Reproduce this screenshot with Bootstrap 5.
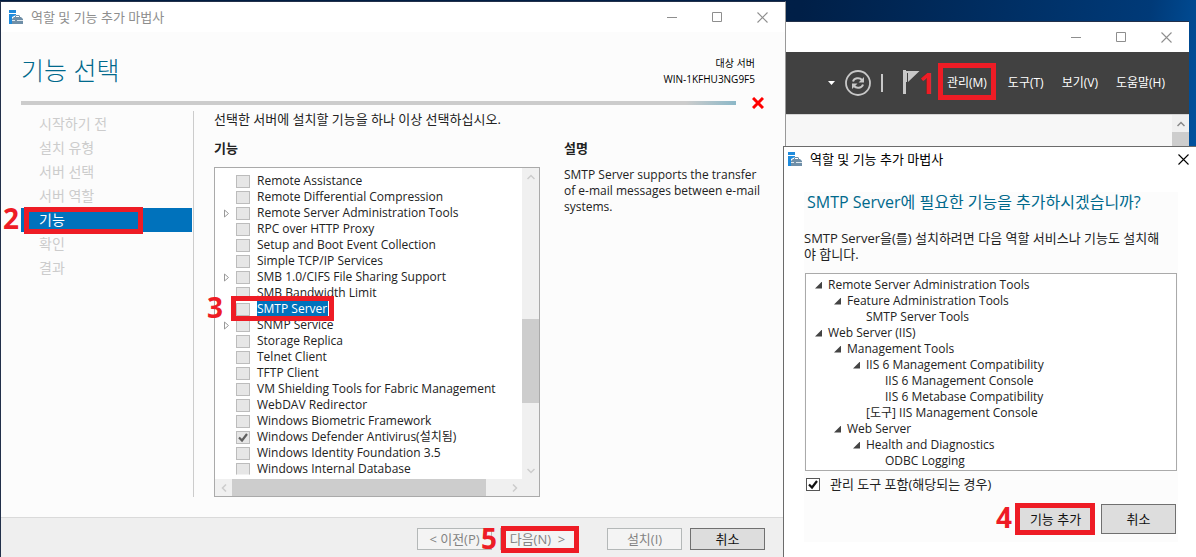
<!DOCTYPE html>
<html lang="ko">
<head>
<meta charset="utf-8">
<meta name="viewport" content="width=device-width, initial-scale=1">
<title>역할 및 기능 추가 마법사</title>
<link href="https://cdn.jsdelivr.net/npm/bootstrap@5.3.0/dist/css/bootstrap.min.css" rel="stylesheet">
<style>
  body { font-family: "Open Sans", "Noto Sans CJK KR", sans-serif; font-size: 13px; line-height: 16px; color: #222; }
  .desktop { background: linear-gradient(100deg, #001c40 0%, #001f47 62%, #003a78 89%, #0062b8 98%); }
  .win { position: absolute; background: #fff; }
  .win-wizard { left: 0; top: 1px; right: 410px; bottom: 0; border: 1px solid #22304a; border-right-color: #999; border-bottom: 0; background: #fcfcfc; }
  .win-manager { right: 7px; top: 21px; bottom: 0; width: 405px; border-top: 1px solid #22304a; }
  .win-dialog { right: 0; top: 146px; bottom: 0; width: 413px; border: 1px solid #6b6b6b; border-right: 0; border-bottom: 0; }

  .title-row { height: 30px; background: #fff; color: #8e8e8e; }
  .win-dialog .title-row { height: 24px; color: #000; }
  .win-btn { width: 45px; padding: 0; border: 0; background: none; color: inherit; line-height: 0; }
  .win-dialog .win-btn { width: 26px; }

  .wiz-head { padding: 22px 30px 0 20px; }
  .wiz-title { font-size: 25px; line-height: 32px; font-weight: 300; color: #00698c; }
  .server-name { font-size: 10px; padding-top: 1px; }
  .wiz-rule { padding: 10px 21px 0 20px; }
  .rule { height: 4px; background: linear-gradient(90deg, #ccc 93%, #8cb8c8 100%); }
  .wiz-body { padding: 2px 20px 20px; }
  .steps { width: 173px; padding-top: 1px; border-right: 1px solid #ccc; }
  .steps a { display: flex; align-items: center; height: 24px; margin-right: 1px; padding-left: 18px; font-size: 14px; color: #ccc; text-decoration: none; }
  .steps a.current { position: relative; background: #0072bc; color: #fff; }
  .wiz-main { padding-left: 20px; }
  .pair { padding-top: 13px; }
  .pair h2 { font-size: 13px; line-height: 16px; font-weight: 700; margin: 0 0 11px; }
  .col-list { width: 326px; }
  .no-min { min-height: 0; }
  .frame { border: 1px solid #aaa; background: #fff; }
  .feature-list { padding-top: 5px; margin-bottom: 2px; font-size: 12px; overflow-x: visible; overflow-y: clip; }
  .feature { height: 16px; padding-left: 9px; }
  .feature:last-child .tick { clip-path: inset(0 0 1px); }
  .expander { width: 6px; margin-right: 6px; line-height: 0; }
  .feature label { padding-left: 7px; white-space: nowrap; }
  .feature .chosen { margin-left: 7px; padding: 0 1px 0 0; background: #0072bc; color: #fff; }
  .tick { appearance: none; flex: none; width: 14px; height: 13px; margin: 0; border: 1px solid #bcbcbc; border-radius: 0; background: #e6e6e6 center/12px 11px no-repeat; }
  .tick:checked { background-image: url("data:image/svg+xml,%3Csvg xmlns='http://www.w3.org/2000/svg' viewBox='0 0 12 11'%3E%3Cpath fill='none' stroke='%23606060' stroke-width='2.2' d='M2 5.5l3 3L10 2'/%3E%3C/svg%3E"); }
  .tick-live { border-color: #555; background-color: #fff; }
  .tick-live:checked { background-image: url("data:image/svg+xml,%3Csvg xmlns='http://www.w3.org/2000/svg' viewBox='0 0 12 11'%3E%3Cpath fill='none' stroke='%23111' stroke-width='2.2' d='M2 5.5l3 3L10 2'/%3E%3C/svg%3E"); }

  .vbar { width: 17px; background: #f0f0f0; color: #ccc; }
  .hbar { height: 17px; background: #f0f0f0; color: #ccc; }
  .arrow { flex: none; width: 17px; height: 17px; display: flex; align-items: center; justify-content: center; }
  .turn-right { transform: rotate(90deg); }
  .turn-down { transform: rotate(180deg); }
  .turn-left { transform: rotate(-90deg); }
  .thumb { background: #cdcdcd; }

  .foot { height: 40px; border-top: 1px solid #dadada; background: #efefef; padding: 10px 20px 0 0; }
  .push { width: 75px; height: 22px; padding: 0; border: 1px solid #707070; background: #ddd; color: #111; font-size: 13px; line-height: 16px; white-space: nowrap; }
  .push:disabled { border-color: #b4b8b8; background: #f4f4f4; color: #838383; }
  .win-dialog .push { height: 30px; }

  .menu-row { height: 62px; padding-right: 23px; background: #414141; color: #ccc; }
  .menu-row a { padding: 0 1px; color: #fff; text-decoration: none; font-size: 12px; white-space: nowrap; }
  .menu-row .gap-wide { margin-right: 19px; }
  .manager-body { background: #f7f7f7; border-top: 1px solid #d5d5d5; }
  .manager-body .vbar { color: #888; }

  .panel { margin: 21px 18px 15px 20px; background: #fcfcfc; }
  .ask { font-size: 16px; line-height: 20px; color: #00698c; font-weight: 400; padding-left: 3px; }
  .need { margin: 18px 0 11px; padding-right: 14px; word-break: break-all; }
  .tree { font-size: 12px; margin: 0 1px; padding: 3px 0 1px 9px; }
  .tree ul { padding-left: 19px; }
  .tree span { display: flex; align-items: center; height: 16px; padding-left: 13px; white-space: nowrap; }
  .tree span.open { padding-left: 0; }
  .tree span.open::before { content: ""; width: 7px; height: 7px; margin-right: 6px; background: #444; clip-path: polygon(100% 0, 100% 100%, 0 100%); }
  .include { padding: 5px 2px 0; }
  .include label { padding-left: 10px; }
  .actions { padding: 12px 2px 0; }

  .ring { position: absolute; border: 5px solid #ee1c25; pointer-events: none; }
  .num { position: absolute; color: #ee1c25; font-size: 28px; font-weight: 700; line-height: 28px; }
  .r1 { inset: -12px -8px -9px -8px; }   .n1 { left: -27px; top: -6px; }
  .r2 { inset: -1px 49px -2px 3px; }     .n2 { left: -18px; top: -4px; }
  .r3 { inset: -5px -6px -4px -26px; }   .n3 { left: -50px; top: -8px; }
  .r4 { inset: -2px -3px -2px -4px; }    .n4 { left: -23px; top: -2px; }
  .r5 { inset: -3px -5px -4px 0; }       .n5 { left: -20px; top: -5px; }
</style>
</head>
<body>
<svg class="d-none">
  <symbol id="app" viewBox="0 0 14 14"><path fill="#1f8bdc" d="M0 0h7v3H0zM0 4h7v1L3 7v7H0z"/><path fill="#6f8fa8" d="M3 9l2-2h1V6l1-1h3l1 1v1h1l2 2v5H3zM7 7h3V6H7z" fill-rule="evenodd"/><path stroke="#fff" d="M3 10.500h3m2 0h6" stroke-width=".8"/></symbol>
  <symbol id="min" viewBox="0 0 11 11"><path stroke="currentColor" d="M0 5.500h10"/></symbol>
  <symbol id="max" viewBox="0 0 11 11"><path fill="none" stroke="currentColor" d="M.5.5h9v9h-9z"/></symbol>
  <symbol id="close" viewBox="0 0 11 11"><path stroke="currentColor" stroke-width="1.100" d="M.5.5l10 10m0-10l-10 10"/></symbol>
  <symbol id="up" viewBox="0 0 8 6"><path fill="none" stroke="currentColor" stroke-width="1.500" d="M.5 5L4 1.500 7.500 5"/></symbol>
  <symbol id="tri" viewBox="0 0 6 9"><path fill="none" stroke="#999" d="M.5 1l4 3.500-4 3.500z"/></symbol>
</svg>

<div class="desktop position-relative vh-100 overflow-hidden">

  <section class="win win-manager d-flex flex-column">
    <header class="title-row d-flex justify-content-end">
      <button class="win-btn" aria-label="최소화"><svg width="11" height="11"><use href="#min"/></svg></button>
      <button class="win-btn" aria-label="최대화"><svg width="11" height="11"><use href="#max"/></svg></button>
      <button class="win-btn" aria-label="닫기"><svg width="11" height="11"><use href="#close"/></svg></button>
    </header>
    <nav class="menu-row d-flex align-items-center justify-content-end">
      <svg class="me-2" width="9" height="5"><path fill="#fff" d="M1 0h7L4.500 4z"/></svg>
      <svg class="me-2" width="28" height="28" fill="none" stroke="#c8c8c8"><circle cx="14" cy="14" r="12" stroke-width="1.800"/><path stroke-width="2" d="M9 12.500c1-3.500 6.500-4.500 9-1.500M19 15.500c-1 3.500-6.500 4.500-9 1.500"/><path fill="#c8c8c8" stroke="none" d="M20 8v5.500h-5.500zM8 20v-5.500h5.500z"/></svg>
      <svg width="4" height="18"><path fill="#c8c8c8" d="M1 0h2v18H1z"/></svg>
      <svg class="ms-3 me-4" width="22" height="26"><path fill="#c8c8c8" d="M3 0h3v24H3zM6 1h13.500L8 12V3H7v9H6z"/></svg>
      <a class="position-relative gap-wide" href="#">관리(M)<i class="ring r1"></i><b class="num n1">1</b></a>
      <a class="me-3" href="#">도구(T)</a>
      <a class="me-3" href="#">보기(V)</a>
      <a href="#">도움말(H)</a>
    </nav>
    <div class="manager-body flex-grow-1 d-flex justify-content-end">
      <div class="vbar d-flex flex-column"><span class="arrow"><svg width="8" height="6"><use href="#up"/></svg></span><div class="thumb flex-grow-1"></div></div>
    </div>
  </section>

  <section class="win win-wizard d-flex flex-column">
    <header class="title-row d-flex align-items-center ps-2">
      <svg width="14" height="14"><use href="#app"/></svg>
      <span class="ms-2 me-auto">역할 및 기능 추가 마법사</span>
      <button class="win-btn" aria-label="최소화"><svg width="11" height="11"><use href="#min"/></svg></button>
      <button class="win-btn" aria-label="최대화"><svg width="11" height="11"><use href="#max"/></svg></button>
      <button class="win-btn" aria-label="닫기"><svg width="11" height="11"><use href="#close"/></svg></button>
    </header>

    <div class="wiz-head d-flex justify-content-between">
      <h1 class="wiz-title m-0">기능 선택</h1>
      <div class="server-name text-end text-black">대상 서버<br>WIN-1KFHU3NG9F5</div>
    </div>
    <div class="wiz-rule d-flex align-items-center">
      <div class="rule flex-grow-1 me-3"></div>
      <svg width="12" height="12"><path stroke="#f00" stroke-width="3" d="M1 1l10 10m0-10L1 11"/></svg>
    </div>

    <div class="wiz-body no-min flex-grow-1 d-flex">
      <nav class="steps flex-shrink-0">
        <a href="#">시작하기 전</a>
        <a href="#">설치 유형</a>
        <a href="#">서버 선택</a>
        <a href="#">서버 역할</a>
        <a href="#" class="current">기능<i class="ring r2"></i><b class="num n2">2</b></a>
        <a href="#">확인</a>
        <a href="#">결과</a>
      </nav>
      <main class="wiz-main flex-grow-1 d-flex flex-column">
        <p class="m-0">선택한 서버에 설치할 기능을 하나 이상 선택하십시오.</p>
        <div class="pair no-min flex-grow-1 d-flex gap-4">
          <div class="col-list flex-shrink-0 d-flex flex-column">
            <h2>기능</h2>
            <div class="frame no-min flex-grow-1 d-flex flex-column">
              <div class="no-min flex-grow-1 d-flex">
                <div class="feature-list flex-grow-1" id="features"></div>
                <div class="vbar d-flex flex-column">
                  <span class="arrow"><svg width="8" height="6"><use href="#up"/></svg></span>
                  <div style="flex: 134"></div><div class="thumb" style="flex: 84"></div><div style="flex: 59"></div>
                  <span class="arrow"><svg class="turn-down" width="8" height="6"><use href="#up"/></svg></span>
                </div>
              </div>
              <div class="hbar d-flex pe-3">
                <span class="arrow"><svg class="turn-left" width="8" height="6"><use href="#up"/></svg></span>
                <div class="thumb" style="flex: 253"></div><div style="flex: 20"></div>
                <span class="arrow"><svg class="turn-right" width="8" height="6"><use href="#up"/></svg></span>
              </div>
            </div>
          </div>
          <div class="flex-grow-1">
            <h2>설명</h2>
            <p style="font-size: 12px">SMTP Server supports the transfer of e-mail messages between e-mail systems.</p>
          </div>
        </div>
      </main>
    </div>

    <footer class="foot d-flex justify-content-end gap-2">
      <button class="push" disabled>&lt; 이전(P)</button>
      <button class="push position-relative" disabled>다음(N) &nbsp;&gt;<i class="ring r5"></i><b class="num n5">5</b></button>
      <button class="push ms-4" disabled>설치(I)</button>
      <button class="push">취소</button>
    </footer>
  </section>

  <section class="win win-dialog d-flex flex-column">
    <header class="title-row d-flex align-items-center ps-1">
      <svg width="14" height="14"><use href="#app"/></svg>
      <span class="ms-2 me-auto">역할 및 기능 추가 마법사</span>
      <button class="win-btn" aria-label="닫기"><svg width="11" height="11"><use href="#close"/></svg></button>
    </header>
    <div class="panel flex-grow-1">
      <h1 class="ask m-0">SMTP Server에 필요한 기능을 추가하시겠습니까?</h1>
      <p class="need">SMTP Server을(를) 설치하려면 다음 역할 서비스나 기능도 설치해야 합니다.</p>
      <div class="frame tree">
        <ul class="list-unstyled p-0 m-0">
          <li><span class="open">Remote Server Administration Tools</span>
            <ul class="list-unstyled"><li><span class="open">Feature Administration Tools</span>
              <ul class="list-unstyled"><li><span>SMTP Server Tools</span></li></ul></li></ul></li>
          <li><span class="open">Web Server (IIS)</span>
            <ul class="list-unstyled">
              <li><span class="open">Management Tools</span>
                <ul class="list-unstyled">
                  <li><span class="open">IIS 6 Management Compatibility</span>
                    <ul class="list-unstyled"><li><span>IIS 6 Management Console</span></li><li><span>IIS 6 Metabase Compatibility</span></li></ul></li>
                  <li><span>[도구] IIS Management Console</span></li>
                </ul></li>
              <li><span class="open">Web Server</span>
                <ul class="list-unstyled"><li><span class="open">Health and Diagnostics</span>
                  <ul class="list-unstyled"><li><span>ODBC Logging</span></li></ul></li></ul></li>
            </ul></li>
        </ul>
      </div>
      <div class="include d-flex align-items-center">
        <input class="tick tick-live" type="checkbox" id="incl" checked><label for="incl">관리 도구 포함(해당되는 경우)</label>
      </div>
      <div class="actions d-flex justify-content-end gap-2">
        <button class="push position-relative">기능 추가<i class="ring r4"></i><b class="num n4">4</b></button>
        <button class="push">취소</button>
      </div>
    </div>
  </section>
</div>

<script src="https://cdn.jsdelivr.net/npm/bootstrap@5.3.0/dist/js/bootstrap.bundle.min.js"></script>
<script>
  const features = ['Remote Assistance', 'Remote Differential Compression', '+Remote Server Administration Tools', 'RPC over HTTP Proxy',
    'Setup and Boot Event Collection', 'Simple TCP/IP Services', '+SMB 1.0/CIFS File Sharing Support', 'SMB Bandwidth Limit', '*SMTP Server',
    '+SNMP Service', 'Storage Replica', 'Telnet Client', 'TFTP Client', 'VM Shielding Tools for Fabric Management', 'WebDAV Redirector',
    'Windows Biometric Framework', 'Windows Defender Antivirus(설치됨)', 'Windows Identity Foundation 3.5', 'Windows Internal Database'];
  document.getElementById('features').innerHTML = features.map((f, i) => {
    const name = f.replace(/^[+*]/, '');
    const chosen = f[0] === '*';
    return `<div class="feature d-flex align-items-center">
      <span class="expander">${f[0] === '+' ? '<svg width="6" height="9"><use href="#tri"/></svg>' : ''}</span>
      <input class="tick" type="checkbox" id="f${i}" ${name.includes('설치됨') ? 'checked' : ''}>
      <label for="f${i}" class="${chosen ? 'chosen position-relative' : ''}">${name}${chosen ? '<i class="ring r3"></i><b class="num n3">3</b>' : ''}</label></div>`;
  }).join('');
</script>
</body>
</html>
